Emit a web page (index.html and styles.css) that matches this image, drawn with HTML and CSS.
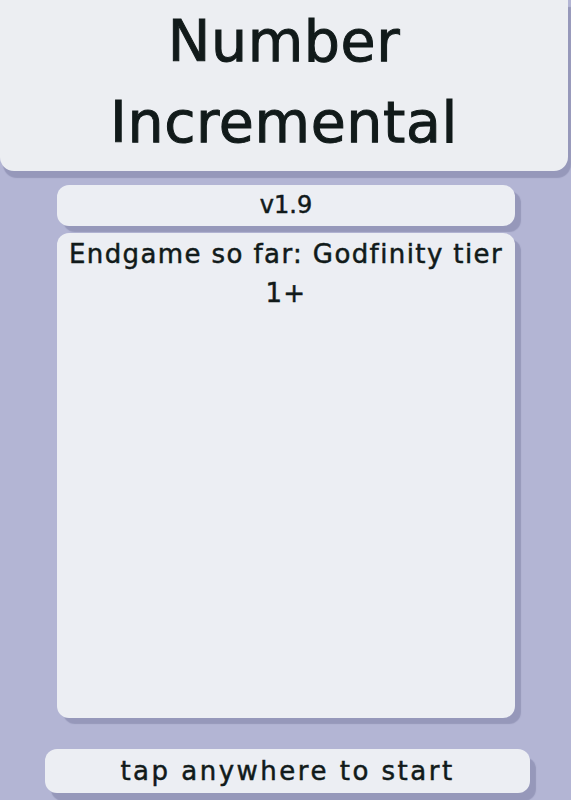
FILE: index.html
```html
<!DOCTYPE html>
<html>
<head>
<meta charset="utf-8">
<link rel="stylesheet" href="styles.css">
</head>
<body>
<div class="page">
  <header class="title-box">
    <h1 class="title">Number<br>Incremental</h1>
  </header>
  <section class="content">
    <div class="card version">v1.9</div>
    <div class="card info">Endgame so far: Godfinity tier 1+</div>
  </section>
  <button class="start">tap anywhere to start</button>
</div>
</body>
</html>
```

FILE: styles.css
```css
html, body {
  margin: 0;
  padding: 0;
  background: #b3b5d4;
  height: 100%;
  overflow: hidden;
}
.page {
  display: flex;
  flex-direction: column;
  font-family: "DejaVu Sans", sans-serif;
  color: #111a1a;
}
.title-box {
  box-sizing: border-box;
  width: 568px;
  height: 171px;
  padding-bottom: 8px;
  background: #eceef2;
  border-radius: 0 0 14px 14px;
  box-shadow: 3px 7px 1px #9698ba;
  display: flex;
  align-items: center;
  justify-content: center;
}
.title {
  margin: 0;
  font-size: 57px;
  line-height: 81px;
  font-weight: normal;
  text-align: center;
  letter-spacing: 0.6px;
  -webkit-text-stroke: 1px #111a1a;
}
.content {
  width: 458px;
  margin: 14px auto 0 57px;
  display: flex;
  flex-direction: column;
  gap: 7px;
}
.card {
  background: #eceef3;
  border-radius: 12px;
  box-shadow: 6px 6px 1px #9698ba;
  text-align: center;
  -webkit-text-stroke: 0.5px #111a1a;
}
.version {
  height: 41px;
  line-height: 41px;
  font-size: 24px;
}
.info {
  height: 485px;
  box-sizing: border-box;
  padding: 2px 8px;
  font-size: 26px;
  line-height: 39px;
  letter-spacing: 1.4px;
}
.start {
  margin: 31px 0 0 45px;
  width: 485px;
  height: 44px;
  border: none;
  padding: 0;
  background: #eceef3;
  border-radius: 12px;
  box-shadow: 6px 8px 1px #9698ba;
  font-family: "DejaVu Sans", sans-serif;
  font-size: 26px;
  letter-spacing: 2.5px;
  color: #111a1a;
  line-height: 43px;
  -webkit-text-stroke: 0.5px #111a1a;
}
```
